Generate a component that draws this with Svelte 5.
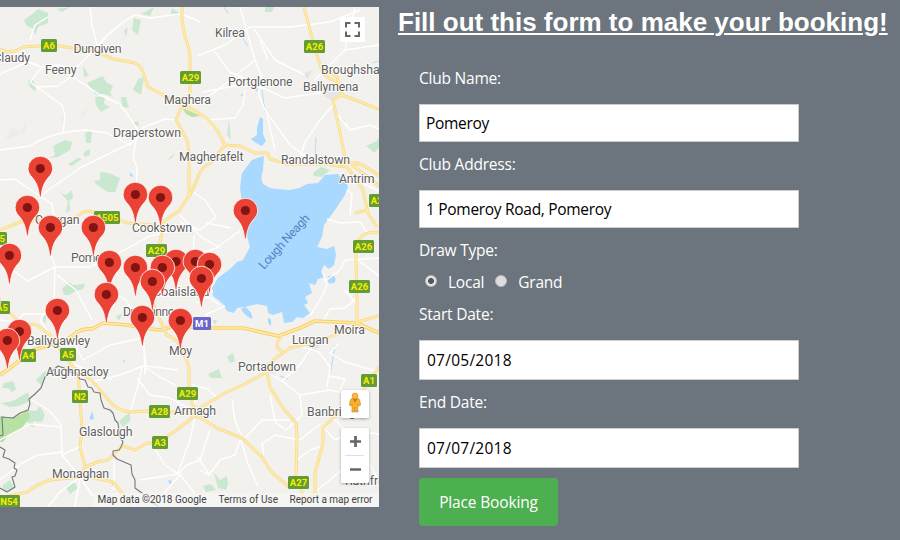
<script>
  let clubName = $state('Pomeroy');
  let clubAddress = $state('1 Pomeroy Road, Pomeroy');
  let drawType = $state('local');
  let startDate = $state('07/05/2018');
  let endDate = $state('07/07/2018');

  const mainRoads = [
    'M0 49L7 52 15 51 23 47 37 46 60 46 72 48 97 51Q104 56 113 59L135 63Q141 66 143 72L148 87 167 97 182 105 190 108 205 117Q214 125 218 132L225 145 240 146 255 153 267 153 270 159 287 164H325L357 163Q368 167 379 176',
    'M182 7V20L185 37Q190 49 190 58V93L182 105 176 120 187 140 189 152V195L180 210 163 222 162 232 159 247 150 280 153 303 160 320 167 335Q179 340 182 349L189 367V390L195 412',
    'M225 145L210 163Q200 168 197 180L189 197',
    'M0 230L20 222 40 220 60 223 77 217Q82 211 90 211L112 216 127 223 163 226',
    'M304 7L310 30 315 50 322 70Q326 78 333 80L341 84 342 95 333 100 338 123 347 167 357 180 363 190 368 213 377 227',
    'M322 70Q330 70 337 77L342 95 363 103 379 109',
    'M379 232Q368 232 363 235L356 243V263L357 300V322',
    'M355 213L368 210M347 167L330 165M350 163L379 186M357 322L379 316',
    'M0 303L20 323 37 325 50 335 60 350 78 373 80 400 82 430 80 447 85 467 80 477 50 480Q38 484 27 492L0 498',
    'M76 370Q92 378 100 390L113 405Q120 411 130 412L147 411 198 413 187 422 167 437 160 443H147L135 450 123 446 113 455Q108 462 100 461L85 467',
    'M85 476L113 482 122 493 130 507',
    'M193 412L210 402 227 392 243 385 267 372 273 360 290 348 323 340 357 325',
    'M196 415L217 428 242 438 263 458Q268 469 275 475L290 488',
    'M267 372L270 387 283 408 296 423 297 437 296 477 305 500',
    'M379 367L363 390 333 418 323 427V443L315 473V493L303 504',
    'M282 336Q276 342 277 347L282 352M333 418L355 402'
  ];
  const motorway = 'M0 375L10 368 33 350 67 340 77 332Q84 328 92 329L103 323 127 325 143 328 160 330 175 326 210 328H243L278 336 300 328 315 321 357 323 379 333';

  const minorRoads = [
    'M90 7L92 25 97 45M0 74L28 62 42 67 60 65 74 70 96 48Q115 25 135 15L150 18 180 14',
    'M0 150L30 146Q50 132 85 130L107 133 130 145 136 140 142 128 165 119 176 120M133 142L80 168 40 196',
    'M42 67L30 82 45 93 62 105 65 115 63 133M37 87L58 86 72 76 100 95 120 104 130 118 138 130',
    'M136 140L133 157 137 168 136 200M182 14L200 22M30 40L35 25 48 17',
    'M240 7L248 35 255 60 263 80 258 92 265 110 290 145 315 163',
    'M198 56L225 45 250 27 290 27 330 22 360 10M255 60L215 92 195 105M203 92L240 85 263 88 285 98 320 93',
    'M215 52L230 72 248 80M260 40L268 60M315 80L345 50 355 7M345 50L379 45',
    'M305 75L275 60 254 29M335 103L320 120 305 142 300 158M267 115L275 150M338 115L350 130 370 125 379 129',
    'M205 120L235 118 243 105 245 90M190 190L205 200 216 217 200 230 180 222M206 223L231 228M190 258L216 248 240 231',
    'M0 180L15 179 40 196 52 204 55 220 50 250 55 267 54 300 40 320 57 346',
    'M0 260L27 281 55 267 90 267 115 255 150 236 190 227M57 275L76 290 92 320',
    'M109 290L126 300 143 328M180 215L200 236 220 248M194 235L193 255',
    'M0 320L17 322 23 314 50 314M71 338L83 360 110 345 143 338 146 366 178 370M146 366L145 374 143 328',
    'M90 382L120 375 143 366 160 377 175 385M71 363L112 380M137 378L150 395 170 398 195 412M130 412L138 386 142 366',
    'M32 400L50 411 61 425 62 455 80 477M0 480L22 463 38 455 63 452M80 477L60 492 48 507M80 477L92 495 105 507M80 477L75 507M62 455L83 445M0 440L30 424 60 427M114 460V490',
    'M195 416L190 440 178 472 200 500M153 446L165 465 178 474 140 480M178 474L187 465 200 460 210 430M180 475L162 495 154 507',
    'M267 372L285 383 300 395 330 390 343 393M300 395L302 415 286 430 275 422 270 395M245 438L262 420 290 420M241 440L248 464 258 486M320 424L300 440 275 435 262 444 264 455M240 440L235 455 220 460 209 475 200 470',
    'M323 427L335 440 342 437M333 418L345 430 379 434M303 347L319 352 330 367 327 387M315 342L300 365 282 381M339 343L330 353 345 362 379 372M329 376L345 379 340 390',
    'M327 280L340 270 345 260 379 258M323 273L327 285 320 300 310 316M358 260L379 276M357 298L345 308 330 309 323 321M345 290L358 306M369 235L360 222 340 223 327 219',
    'M347 190L352 194 350 215M352 178L379 191M225 306L207 314 205 325M213 291L200 294 190 280M196 303L208 297 220 305',
    'M195 404L193 385 208 389 216 397M209 474L197 456M232 399L235 421 243 438M310 496L342 470 352 462M297 460L310 450 325 445M370 465L379 480'
  ];

  const woods = [
    'M24 20L31 15 38 9 48 13 48 23 38 27 35 35 32 28 27 26Z',
    'M141 14L154 7 150 16ZM172 8L179 13 177 16 171 14ZM134 18L141 20 138 35 132 30ZM124 31L128 27 126 37ZM56 9L70 7 62 12Z',
    'M83 66L89 76 84 77ZM87 83L96 79 103 76 106 82 113 86 110 93 113 97 104 94 96 95ZM95 97L105 96 104 104 110 107 101 112 96 105ZM133 90L138 79 144 77 141 95ZM121 97L126 97 129 108 122 107ZM28 80L33 80 36 89 34 91 30 87Z',
    'M49 158L55 155 53 146 65 140 72 142 70 150 58 157ZM85 133L92 130 91 143 86 143ZM68 164L78 158 82 159 72 166ZM84 152L90 149 90 155 84 157ZM166 161L175 153 173 157ZM133 123L138 121 139 126 134 125Z',
    'M94 181L100 180 100 172 109 173 120 178 117 187 115 192 108 192 96 184ZM60 192L66 195 72 190 73 197 69 202 70 210 66 213 68 201ZM62 289L69 282 73 285 85 284 83 289 76 291 69 295 64 295ZM42 316L47 312 45 325ZM116 316L122 314 119 321Z',
    'M0 403L9 402 15 400 28 392 30 401 19 406 10 407ZM4 383L13 381 16 389 12 392 8 388 2 388ZM28 410L36 411 40 406 45 415 42 422 33 421 34 428 29 424 25 415ZM36 380L43 373 48 370 41 385Z',
    'M119 421L130 412 130 421 123 427ZM66 487L74 482 78 488 70 494ZM2 486L10 480 14 488 6 492ZM111 484L116 482 115 488ZM208 374L219 369 222 378 211 378ZM227 357L233 353 235 361 230 363Z',
    'M265 7L274 7 272 12 265 12ZM227 135L229 120 231 140ZM240 95L244 93 243 97ZM253 88L261 86 258 93ZM366 146L375 142 379 138V148L374 153 370 149ZM314 172L321 167 330 170 322 177 313 176ZM203 486L211 484 216 490 206 492ZM214 473L220 480 227 476 228 484 226 490 218 488ZM213 320L217 320 215 325Z'
  ];

  // [text, x, baseline, width]
  const towns = [
    ['Claudy', -6.5, 61.5, 36.5], ['Dungiven', 73.5, 52.5, 48], ['Feeny', 45, 73.5, 31.5],
    ['Maghera', 164, 103.5, 47], ['Draperstown', 113, 136.5, 68], ['Magherafelt', 179, 160.5, 64.5],
    ['Kilrea', 215, 36.5, 30], ['Portglenone', 228, 85.5, 64.5], ['Broughshane', 321, 73.5, 72],
    ['Ballymena', 303, 90.5, 55.5], ['Randalstown', 281, 163.5, 69], ['Antrim', 339, 182.5, 35.5],
    ['Creggan', 35, 223.5, 44.5], ['Cookstown', 132, 231.5, 60], ['Pomeroy', 71, 261.5, 46],
    ['Coalisland', 153.5, 295.5, 56], ['Dungannon', 123, 315.5, 58], ['Ballygawley', 27, 344.5, 63],
    ['Aughnacloy', 46, 375.5, 62.5], ['Moy', 169, 354.5, 23], ['Moira', 334, 333.5, 31],
    ['Lurgan', 292, 343.5, 36.5], ['Portadown', 238, 370.5, 58], ['Armagh', 174, 414.5, 42],
    ['Glaslough', 79, 435.5, 53.5], ['Monaghan', 52, 477.5, 57], ['Banbridge', 307, 415.5, 55],
    ['Rathfriland', 345, 484.5, 59]
  ];

  // [text, x, y, width]
  const shields = [
    ['A6', 41, 39, 16], ['A29', 180, 71, 21], ['A26', 304, 40, 21], ['A505', 94, 211, 26],
    ['A29', 146, 244, 21], ['A5', -6, 301, 16], ['A5', -9, 232, 16], ['A4', 20.5, 349, 15.5],
    ['A5', 60, 348, 16], ['N2', 72, 390, 16], ['A28', 149, 405, 21], ['A29', 177, 387, 21],
    ['A3', 152, 436, 16], ['N54', -2, 495, 22], ['A27', 288, 476, 21], ['A1', 361, 374, 16],
    ['A26', 353, 240, 21], ['A26', 349, 280, 21], ['A26', 369, 194, 21], ['M1', 193, 317, 18]
  ];

  const pins = [
    [40.3, 168.5], [135.4, 194.5], [160.5, 197.5], [27.4, 207.5], [245.4, 210.5], [50.4, 227.5],
    [93.4, 227.5], [9.4, 255.5], [176, 261.5], [195.4, 261.5], [109.4, 262.5], [209.5, 264.5],
    [135.4, 267.5], [162.4, 267.5], [201.4, 278.5], [152.4, 281.5], [106.4, 294.5], [-11.5, 301],
    [57.4, 310.5], [142.4, 317.5], [180.4, 320.5], [19.4, 331.5], [7.4, 340.5]
  ];
</script>

<main class="page">
  <section class="map">
    <svg width="379" height="500" viewBox="0 7 379 500" role="img" aria-label="Map of clubs">
      <rect y="7" width="379" height="500" fill="#f3f1ee" />
      <g fill="#c9e8cf">
        {#each woods as d}<path {d} />{/each}
      </g>
      <path d="M0 416L13 418 28 410 30 418 20 430 8 436 3 442 0 442Z" fill="#b7e2a4" />
      <path d="M182 108L190 111 200 116 192 117 186 114Z" fill="#b7e2a4" />
      <g fill="#e6e5e6">
        <path d="M320 89L334 86 342 91 334 101 325 97ZM302 74L312 70 308 79ZM306 344L320 338 319 348 308 350ZM191 410L200 407 203 417 194 420ZM265 365L272 360 276 372 267 378Z" />
        <path d="M80 113L88 108 84 118ZM5 140L12 128 20 132 27 120 25 132 12 138ZM60 117L66 115 63 125Z" fill="#eeece9" />
      </g>

      <g fill="#a9d9ff">
        <path d="M252 160L257 158 264 156 263 170Q260 177 263 184L270 188 277 189 290 190 299 188 307 184 318 183 325 175 338 174 347 184 348 187 345 195 335 210 324 225 322 237 317 247 327 249 334 246 336 255 334 265 329 269 324 265 321 272 325 277 318 279 315 285 309 283 312 293 305 297 308 303 304 305 310 313 303 318 297 317 292 322 284 323 282 312 273 315 268 313 267 306 257 304 245 307 237 308 234 313 227 311 223 304 213 296 212 288 218 278 230 269 237 262 243 260 250 247 248 240 244 222 240 187 242 173Z" />
        <path d="M260 117L263 119 263 134 266 141 262 146 256 143 251 139 257 135 257 128Z" />
        <path d="M245 307Q253 312 252 319Q244 315 241 309ZM268 318Q272 318 271 326Q267 323 268 318Z" />
        <circle cx="331.500" cy="279.500" r="4" />
        <path d="M130 172L134 177 130 176ZM90 417L92 411 94 419 90 420ZM342 118L345 122 343 122ZM168 480L172 481 170 485ZM123 359L125 361 124 363Z" />
      </g>
      <g fill="none" stroke="#b8dcf5" stroke-width="1">
        <path d="M241 36L248 46M224 7L228 13M262 90L265 112M316 137L315 155M372 63L379 61M335 345L331 370M280 376L288 379M355 415L364 420" />
      </g>

      <g fill="none" stroke="#fff" stroke-width="1.400" stroke-linejoin="round">
        {#each minorRoads as d}<path {d} />{/each}
      </g>
      <g fill="none" stroke="#f7d98a" stroke-width="3" stroke-linejoin="round">
        {#each mainRoads as d}<path {d} />{/each}
      </g>
      <path d={motorway} fill="none" stroke="#f7cf66" stroke-width="3.700" stroke-linejoin="round" />
      <g fill="none" stroke="#ffeba8" stroke-width="1.700" stroke-linejoin="round">
        {#each mainRoads as d}<path {d} />{/each}
        <path d={motorway} />
      </g>
      <g fill="none" stroke="#777" stroke-width="1.100" stroke-linejoin="round">
        <path d="M0 436L3 435 2 417 13 418 20 413 28 410 30 404 29 399 35 394 41 388 45 377 50 373 58 366 64 368 70 372 76 373 80 379 85 380 88 387 92 388 94 392 100 393 101 400 104 408 110 410 113 413 115 420 118 423 120 437 123 442 121 447 119 450 113 451 113 455 117 459 124 462 131 465 132 474 135 480 135 488 142 493 148 500 158 506" />
        <path d="M0 447L5 450 3 457 9 459 15 463 14 468 17 470 15 476 12 477 15 487 7 492 0 488" />
      </g>

      {#each shields as [text, x, y, w]}
        <rect {x} {y} width={w} height="13" rx="1.500" fill={text === 'M1' ? '#6c66cc' : '#649b35'} />
        <text class="shield" class:motorway={text === 'M1'} x={x + w / 2} y={y + 9.9}>{text}</text>
      {/each}

      {#each towns as [text, x, y, w]}
        <text class="town" {x} {y} textLength={w}>{text}</text>
      {/each}
      <text class="water" transform="translate(264 270) rotate(-48)" textLength="69">Lough Neagh</text>

      {#each pins as [x, y]}
        <g transform="translate({x} {y})">
          <path d="M-.7 28.500C-1.800 18.500-4 14-7.800 9.300C-10.800 6-12.300 3.700-12.300 0A12.300 12.300 0 0 1 12.300 0C12.300 3.700 10.800 6 7.800 9.300C4 14 1.800 18.500 .7 28.500Z" fill="#ea4335" stroke="#fff" stroke-width=".8" />
          <circle r="4.600" fill="#811411" />
        </g>
      {/each}

      <rect x="93" y="493" width="286" height="14" fill="#f5f5f5" fill-opacity=".75" />
      <g class="credit">
        <text x="97.500" y="503" textLength="109">Map data ©2018 Google</text>
        <text x="218.500" y="503" textLength="59.500">Terms of Use</text>
        <text x="289.500" y="503" textLength="83">Report a map error</text>
      </g>

      <rect x="340" y="17" width="25" height="25" fill="#fff" />
      <path d="M346 27.500V23H350.500M354.500 23H359V27.500M359 31.500V36H354.500M350.500 36H346V31.500" fill="none" stroke="#666" stroke-width="2" />

      <g class="control">
        <rect x="341" y="390" width="28" height="28" rx="1.500" fill="#fff" />
        <rect x="341" y="428" width="28" height="55" rx="1.500" fill="#fff" />
      </g>
      <path d="M345 455.500H364" stroke="#e0e0e0" />
      <path d="M350 441.500H361M355.500 436V447M350 469.500H361" stroke="#666" stroke-width="2.700" />
      <ellipse cx="355" cy="411" rx="4.500" ry="1.300" fill="#ddd" />
      <path d="M350.500 399.500Q351 398.500 352.500 398.500H357.500Q359 398.500 359.500 399.500L360.700 405 359 406 358.200 404 357.500 412H355.600L355 407 354.400 412H352.300L351.700 404 351 406 349.300 405Z" fill="#f5b22b" stroke="#c98718" stroke-width=".6" />
      <path d="M352.500 399L355 402.500 357.500 399Z" fill="#d9702a" />
      <circle cx="355" cy="396" r="2.900" fill="#f8bd3b" stroke="#c98718" stroke-width=".6" />
    </svg>
  </section>

  <section class="booking">
    <h1>Fill out this form to make your booking!</h1>
    <form onsubmit={(e) => e.preventDefault()}>
      <label for="name">Club Name:</label>
      <input id="name" class="field" type="text" bind:value={clubName} />
      <label for="address">Club Address:</label>
      <input id="address" class="field" type="text" bind:value={clubAddress} />
      <div class="label">Draw Type:</div>
      <div class="radios">
        <label><input type="radio" value="local" bind:group={drawType} /><span>Local</span></label>
        <label><input type="radio" value="grand" bind:group={drawType} /><span>Grand</span></label>
      </div>
      <label for="start">Start Date:</label>
      <input id="start" class="field date" type="text" bind:value={startDate} />
      <label for="end">End Date:</label>
      <input id="end" class="field date" type="text" bind:value={endDate} />
      <button type="submit">Place Booking</button>
    </form>
  </section>
</main>

<style>
  :global(body) {
    background: #6c757d;
  }
  .page {
    display: flex;
    box-sizing: border-box;
    height: 540px;
    padding-top: 7px;
    overflow: hidden;
    background: #6c757d;
    color: #fff;
    font: 15.5px/24px 'Open Sans', 'Noto Sans', sans-serif;
    letter-spacing: -0.22px;
  }
  .map {
    flex: 0 0 379px;
    height: 500px;
  }
  .map svg {
    display: block;
    letter-spacing: 0;
  }
  .town {
    font: 12.3px Roboto, sans-serif;
    fill: #606060;
    stroke: #fff;
    stroke-width: 2px;
    stroke-opacity: 0.8;
    stroke-linejoin: round;
    paint-order: stroke;
  }
  .water {
    font: 12.3px Roboto, sans-serif;
    fill: #5484c4;
  }
  .shield {
    font: 700 9.5px Roboto, sans-serif;
    fill: #f4ee00;
    text-anchor: middle;
  }
  .shield.motorway {
    fill: #fff;
  }
  .credit {
    font: 10px Roboto, sans-serif;
    fill: #444;
  }
  .control {
    filter: drop-shadow(0 1px 1.5px rgba(0, 0, 0, 0.3));
  }
  .booking {
    flex: 1;
    padding-left: 19px;
  }
  h1 {
    margin: 0;
    font: 700 26px/30px 'Liberation Sans', Arial, sans-serif;
    letter-spacing: 0;
    white-space: nowrap;
    text-decoration: underline;
    text-decoration-thickness: 2px;
    text-underline-offset: 2px;
  }
  form {
    display: flex;
    flex-direction: column;
    align-items: flex-start;
    padding: 29px 0 0 21px;
  }
  form > label,
  .label {
    height: 24px;
    margin-bottom: 14px;
  }
  .field {
    box-sizing: border-box;
    width: 380px;
    height: 38px;
    margin: 0 0 10px;
    padding: 0 6px;
    border: 1px solid #ccc;
    border-radius: 0;
    background: #fff;
    color: #000;
    font: inherit;
    letter-spacing: -0.3px;
    outline: none;
  }
  .date {
    height: 40px;
    padding-left: 7px;
    letter-spacing: 0.25px;
  }
  .label {
    margin-bottom: 8px;
  }
  .radios {
    display: flex;
    gap: 11px;
    height: 24px;
    padding-left: 6px;
    margin-bottom: 8px;
  }
  .radios label {
    display: flex;
    gap: 11px;
  }
  .radios input {
    appearance: none;
    box-sizing: border-box;
    width: 12px;
    height: 12px;
    margin: 5px 0 0;
    border: 1px solid #bbb;
    border-radius: 50%;
    background: #ddd;
  }
  .radios input:checked {
    background: radial-gradient(circle, #555 0 2.6px, #e6e6e6 3.3px);
  }
  button {
    width: 139px;
    height: 48px;
    padding: 0;
    border: 0;
    border-radius: 4px;
    background: #4caf50;
    color: #fff;
    font: inherit;
    letter-spacing: -0.15px;
  }
</style>
